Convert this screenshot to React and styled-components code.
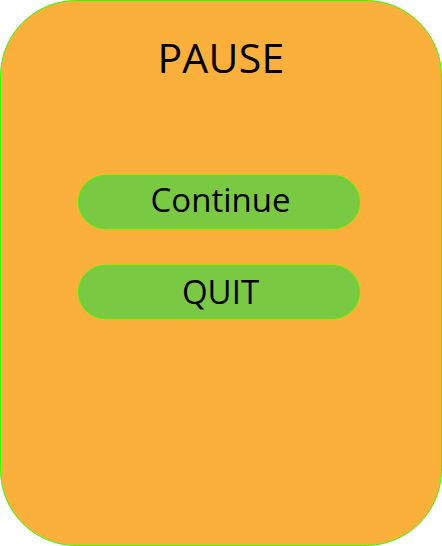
import styled, { createGlobalStyle } from "styled-components";

const GlobalStyle = createGlobalStyle`
  html, body {
    margin: 0;
    padding: 0;
    background: #ffffff;
  }
`;

const Panel = styled.div`
  box-sizing: border-box;
  width: 442px;
  height: 546px;
  background-color: #fbb03b;
  border: 1px solid #33ff00;
  border-radius: 76px;
  display: flex;
  flex-direction: column;
  align-items: center;
  font-family: "Open Sans", "Liberation Sans", sans-serif;
  color: #000000;
`;

const Title = styled.h1`
  margin: 28px 0 0;
  font-size: 41px;
  font-weight: 400;
  line-height: 56px;
  letter-spacing: 0.3px;
`;

const Menu = styled.div`
  display: flex;
  flex-direction: column;
  gap: 36px;
  margin: 90px 4px 0 0;
`;

const MenuButton = styled.button`
  box-sizing: border-box;
  width: 282px;
  height: 54px;
  background-color: #7ac943;
  border: 1px solid #33ff00;
  border-radius: 27px;
  font-family: inherit;
  font-size: 33px;
  color: #000000;
  display: flex;
  align-items: center;
  justify-content: center;
  padding: ${(p) => (p.$low ? "0 0 1px 3px" : "0 0 5px 3px")};
  cursor: pointer;
`;

const App = () => {
  return (
    <>
      <GlobalStyle />
      <Panel>
        <Title>PAUSE</Title>
        <Menu>
          <MenuButton>Continue</MenuButton>
          <MenuButton $low>QUIT</MenuButton>
        </Menu>
      </Panel>
    </>
  );
};

export default App;
